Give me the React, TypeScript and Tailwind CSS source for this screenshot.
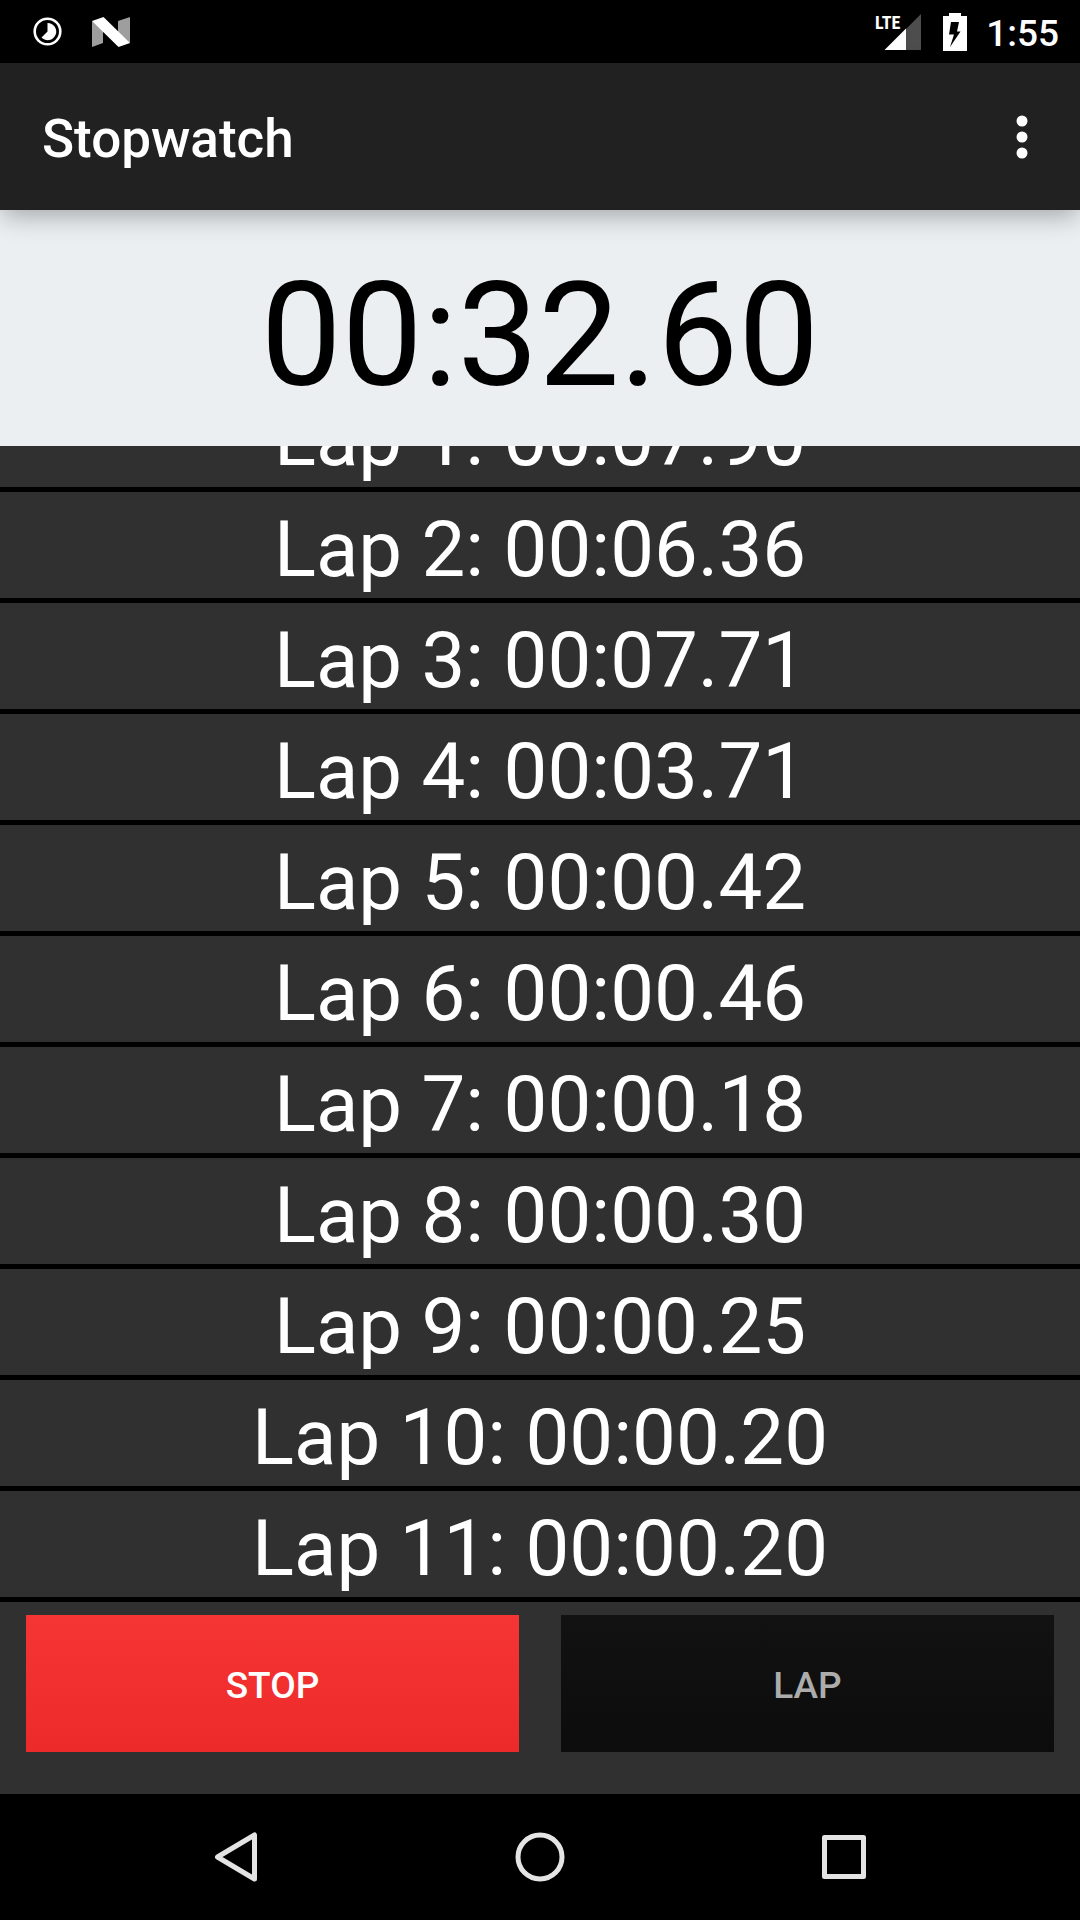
import { useLayoutEffect, useRef } from "react";

const laps = [
  "00:07.90",
  "00:06.36",
  "00:07.71",
  "00:03.71",
  "00:00.42",
  "00:00.46",
  "00:00.18",
  "00:00.30",
  "00:00.25",
  "00:00.20",
  "00:00.20",
];

function StatusBar() {
  return (
    <div className="flex h-[63px] shrink-0 items-center justify-between bg-black pr-[21px] pl-8">
      <div className="flex items-center gap-7">
        <svg className="size-8" viewBox="0 0 32 32" aria-label="Timer running">
          <circle cx="15.5" cy="15.5" r="12.8" fill="none" stroke="#fff" strokeWidth="2.6" />
          <path d="M15.5 7a8.6 8.6 0 1 1-6 14.6l6-6z" fill="#fff" />
        </svg>
        <svg className="h-8 w-10" viewBox="0 0 40 32" aria-label="Android N">
          <path d="M0 5l11 8v14L0 31zM26 5l12-4v26l-12-9z" fill="#9e9e9e" />
          <path d="M0 5L11.5 1 38 27l-11.5 4z" fill="#fff" />
        </svg>
      </div>
      <div className="flex items-center">
        <svg className="h-10 w-12" viewBox="0 0 48 40" aria-label="LTE signal">
          <path d="M46 2v36H31V17z" fill="#4d4d4d" />
          <path d="M9.500 38L31 16.500V38z" fill="#fff" />
          <text x="0" y="17" fill="#fff" fontSize="18" fontWeight="700" fontFamily="'Roboto Condensed', 'Liberation Sans Narrow', Roboto, sans-serif">
            LTE
          </text>
        </svg>
        <svg className="ml-5 h-10 w-6" viewBox="0 0 24 40" aria-label="Battery charging">
          <path
            d="M6 1h12v3h6v35H0V4h6zM8 10L6 22.500h5L7 35l10.500-15.500H14L16 10z"
            fill="#fff"
            fillRule="evenodd"
          />
        </svg>
        <span className="ml-[19px] pt-1 text-[37px] leading-10 font-medium text-white">1:55</span>
      </div>
    </div>
  );
}

function AppBar() {
  return (
    <header className="relative z-10 flex h-[147px] shrink-0 items-center justify-between bg-[#212121] pr-[26px] pl-[42px] shadow-[0_8px_24px_-2px_rgba(0,0,0,0.3)]">
      <h1 className="pt-1 text-[53px] leading-[64px] font-medium text-white">Stopwatch</h1>
      <button type="button" aria-label="More options" className="flex size-16 items-center justify-center">
        <svg className="h-12 w-4" viewBox="0 0 16 48" fill="#fff">
          <circle cx="8" cy="8" r="5.500" />
          <circle cx="8" cy="24" r="5.500" />
          <circle cx="8" cy="40" r="5.500" />
        </svg>
      </button>
    </header>
  );
}

function LapList() {
  const listRef = useRef<HTMLOListElement>(null);

  // Keep the newest lap in view.
  useLayoutEffect(() => {
    const list = listRef.current;
    if (list) list.scrollTop = list.scrollHeight;
  }, []);

  return (
    <ol ref={listRef} className="min-h-0 flex-1 overflow-y-auto [scrollbar-width:none]">
      {laps.map((time, i) => (
        <li
          key={i}
          className="border-b-[5px] border-black pt-[10px] text-center text-[78px] leading-[96px] whitespace-nowrap text-white"
        >
          Lap {i + 1}: {time}
        </li>
      ))}
    </ol>
  );
}

function NavBar() {
  return (
    <nav className="grid h-[126px] shrink-0 grid-cols-3 items-center bg-black px-[84px]">
      <button type="button" aria-label="Back" className="flex justify-center">
        <svg className="size-[60px]" viewBox="0 0 60 60" fill="none" stroke="#e4e4e4" strokeWidth="5" strokeLinejoin="round">
          <path d="M48.500 8v44L11.500 30z" />
        </svg>
      </button>
      <button type="button" aria-label="Home" className="flex justify-center">
        <svg className="size-[60px]" viewBox="0 0 60 60" fill="none" stroke="#e4e4e4" strokeWidth="5">
          <circle cx="30" cy="30" r="22" />
        </svg>
      </button>
      <button type="button" aria-label="Overview" className="flex justify-center">
        <svg className="size-[60px]" viewBox="0 0 60 60" fill="none" stroke="#e4e4e4" strokeWidth="5" strokeLinejoin="round">
          <path d="M10.500 10.500h39v39h-39z" />
        </svg>
      </button>
    </nav>
  );
}

export default function App() {
  return (
    <div className="flex h-screen flex-col bg-[#303030] font-[Roboto,sans-serif]">
      <StatusBar />
      <AppBar />
      <main className="flex min-h-0 flex-1 flex-col">
        <div
          role="timer"
          className="shrink-0 bg-[#ebeff2] pt-4 text-center text-[144px] leading-[220px] text-black"
        >
          00:32.60
        </div>
        <LapList />
        <div className="grid shrink-0 grid-cols-2 gap-[42px] px-[26px] pt-[13px] pb-[42px] text-[37px] font-medium">
          <button
            type="button"
            className="flex h-[137px] items-center justify-center bg-linear-to-b from-[#f53434] to-[#ed2a2a] pt-1 text-white"
          >
            STOP
          </button>
          <button
            type="button"
            disabled
            className="flex h-[137px] items-center justify-center bg-linear-to-b from-[#121212] to-[#0c0c0c] pt-1 text-[#acacac]"
          >
            LAP
          </button>
        </div>
      </main>
      <NavBar />
    </div>
  );
}
